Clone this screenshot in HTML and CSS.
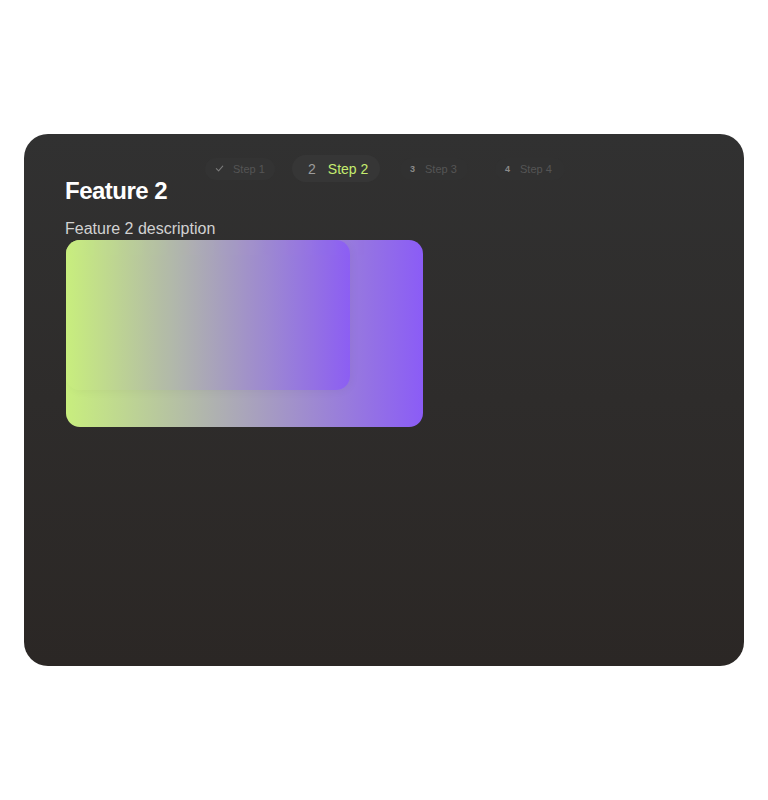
FILE: index.html
```html
<!DOCTYPE html>
<html>
<head>
  <title>Features</title>
  <meta charset="UTF-8">
  <link rel="stylesheet" href="styles.css">
</head>
<body>
<div class="card">
  <div class="steps">
    <div class="step done">
      <svg class="check" width="9" height="9" viewBox="0 0 10 10"><path d="M1.5 5.2 L4 7.6 L8.6 2.4" fill="none" stroke="#7a7a7a" stroke-width="1.2" stroke-linecap="round" stroke-linejoin="round"/></svg>
      <span class="label">Step 1</span>
    </div>
    <div class="step active">
      <span class="num">2</span>
      <span class="label">Step 2</span>
    </div>
    <div class="step s3">
      <span class="num">3</span>
      <span class="label">Step 3</span>
    </div>
    <div class="step s4">
      <span class="num">4</span>
      <span class="label">Step 4</span>
    </div>
  </div>

  <h2>Feature 2</h2>
  <p class="desc">Feature 2 description</p>

  <div class="preview">
    <div class="preview-inner"></div>
  </div>
</div>
</body>
</html>
```

FILE: styles.css
```css
body {
  margin: 0; background: #fff;
  font-family: "Liberation Sans", Arial, sans-serif;
}
.card {
  position: relative;
  margin: 134px 24px 0;
  height: 532px;
  box-sizing: border-box;
  padding: 43px 41px;
  border-radius: 24px;
  background: linear-gradient(#313131, #2b2725);
}
.steps {
  position: absolute; top: 21px; left: 0; right: 0;
  display: flex; justify-content: center; align-items: center;
  padding-left: 2px;
}
.step {
  display: flex; align-items: center; box-sizing: border-box;
  height: 22px; border-radius: 999px; background: #333;
  padding: 0 10px; font-size: 11px; color: #555;
  white-space: nowrap;
}
.step.done { width: 70px; gap: 9px; }
.step.active {
  width: 88px; height: 27px; margin-left: 17px; gap: 12px;
  padding: 0 12px 0 16px; background: #363636; font-size: 14px;
}
.step.active .num { color: #9c9c9c; }
.step.active .label { color: #c5ec6f; }
.step.s3 { width: 68px; margin-left: 20px; gap: 10px; background: #313131; }
.step.s4 { width: 70px; margin-left: 27px; gap: 10px; background: #313131; }
.step .num { font-size: 9px; font-weight: bold; color: #8a8a8a; }
.step.active .num { font-size: 14px; font-weight: normal; }
h2 {
  margin: 0; font-size: 24px; line-height: 28.8px;
  letter-spacing: -0.5px; color: #fff;
}
.desc { margin: 14px 0 2px; font-size: 16px; color: #d2d2d2; }
.preview {
  position: relative; margin-left: 1px;
  width: 357px; height: 187px; border-radius: 14px;
  background: linear-gradient(90deg, #c8ee7e, #8b5cf6);
  overflow: hidden;
}
.preview-inner {
  width: 284px; height: 150px; border-radius: 0 14px 14px 14px;
  background: linear-gradient(90deg, #c8ee7e, #8b5cf6);
  box-shadow: 2px 2px 8px rgba(0,0,0,0.04);
  opacity: 0.9;
}
```
